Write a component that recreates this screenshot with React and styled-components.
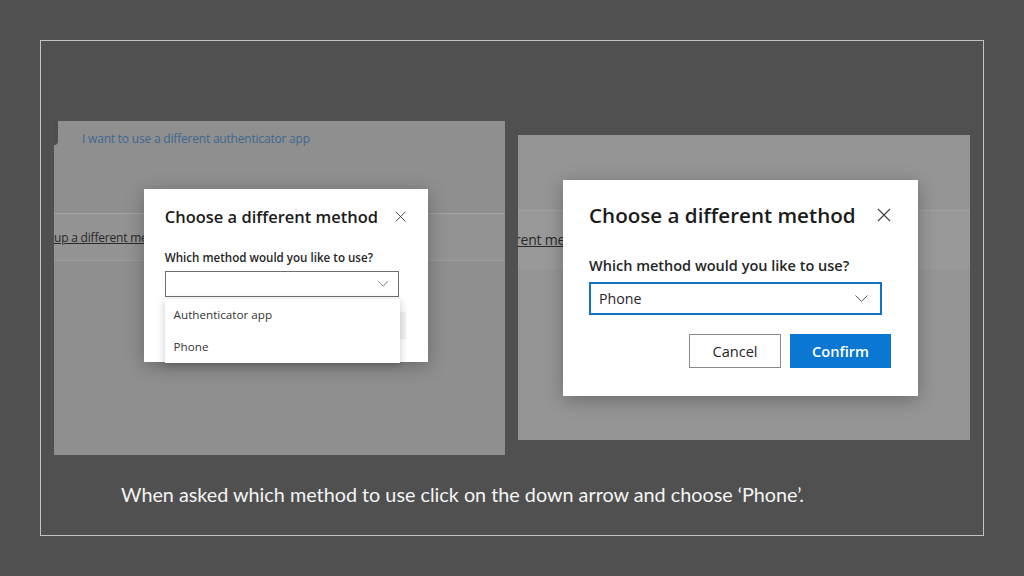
import React from "react";
import styled, { createGlobalStyle } from "styled-components";

const Global = createGlobalStyle`
  html, body { margin: 0; padding: 0; background: #505050; }
  body { width: 1024px; height: 576px; overflow: hidden; font-family: "Open Sans", "Noto Sans", sans-serif; }
`;

const Frame = styled.div`
  box-sizing: border-box;
  margin: 40px;
  width: 944px;
  height: 496px;
  border: 1px solid #c4c4c4;
  padding: 80px 13px 0;
  display: flex;
  flex-direction: column;
`;

const ShotRow = styled.div`
  display: flex;
  gap: 13px;
  align-items: flex-start;
`;

const Shot = styled.div`
  position: relative;
  overflow: hidden;
  width: ${(p) => p.$w}px;
  height: ${(p) => p.$h}px;
  margin-top: ${(p) => p.$top || 0}px;
  background: ${(p) => p.$bg};
  display: flex;
  flex-direction: column;
`;

const Notch = styled.div`
  position: absolute;
  left: 0;
  top: 0;
  width: 4px;
  height: 24px;
  background: #4e4e4e;
  border-bottom-right-radius: 4px;
`;

const BgLink = styled.div`
  margin: 10px 0 0 28px;
  font-size: 12px;
  line-height: 16px;
  color: #3f6890;
  letter-spacing: -0.2px;
`;

const Band = styled.div`
  margin-top: ${(p) => p.$top}px;
  height: ${(p) => p.$h}px;
  border-top: 1px solid #a2a2a2;
  border-bottom: 1px solid #9a9a9a;
  background: ${(p) => p.$bg};
  display: flex;
  align-items: center;
  overflow: hidden;
`;

const BandText = styled.span`
  margin-left: ${(p) => p.$shift}px;
  font-size: ${(p) => p.$fs}px;
  color: #2a2a2a;
  text-decoration: underline;
  white-space: nowrap;
  letter-spacing: -0.2px;
`;

const Dialog = styled.div`
  position: absolute;
  left: ${(p) => p.$x}px;
  top: ${(p) => p.$y}px;
  box-sizing: border-box;
  width: ${(p) => 355 * p.$k}px;
  height: ${(p) => 216 * p.$k}px;
  padding: ${(p) => `${24 * p.$k}px ${27 * p.$k}px 0 ${26 * p.$k}px`};
  background: #fff;
  box-shadow: 0 4px 18px rgba(0, 0, 0, 0.28);
  display: flex;
  flex-direction: column;
`;

const TitleRow = styled.div`
  display: flex;
  align-items: center;
  justify-content: space-between;
  height: ${(p) => 22 * p.$k}px;
`;

const Title = styled.div`
  font-size: ${(p) => 20.6 * p.$k}px;
  font-weight: 600;
  color: #1b1b1b;
  white-space: nowrap;
`;

const Label = styled.div`
  margin-top: ${(p) => 31 * p.$k}px;
  font-size: ${(p) => 14.5 * p.$k}px;
  line-height: ${(p) => 18 * p.$k}px;
  font-weight: 600;
  color: #262626;
  white-space: nowrap;
`;

const SelectWrap = styled.div`
  position: relative;
  margin-top: ${(p) => 7 * p.$k}px;
  width: ${(p) => 293 * p.$k}px;
`;

const SelectBox = styled.div`
  box-sizing: border-box;
  height: ${(p) => 33 * p.$k}px;
  border: ${(p) => (p.$focus ? `2px solid #0f74c8` : `1px solid #6e6e6e`)};
  padding: 0 ${(p) => 12 * p.$k}px 0 ${(p) => (p.$focus ? 8 : 9) * p.$k}px;
  display: flex;
  align-items: center;
  justify-content: space-between;
  font-size: ${(p) => 14.2 * p.$k}px;
  color: #262626;
  background: #fff;
`;

const List = styled.div`
  position: absolute;
  left: 0;
  top: ${(p) => 35 * p.$k}px;
  width: calc(100% + 1px);
  background: #fff;
  box-shadow: 0 2px 8px rgba(0, 0, 0, 0.22);
  z-index: 2;
`;

const Option = styled.div`
  height: ${(p) => 40 * p.$k}px;
  padding-left: ${(p) => 11 * p.$k}px;
  display: flex;
  align-items: center;
  font-size: ${(p) => 14.6 * p.$k}px;
  color: #333;
`;

const Buttons = styled.div`
  margin-top: ${(p) => 19 * p.$k}px;
  display: flex;
  justify-content: flex-end;
  gap: ${(p) => 9 * p.$k}px;
`;

const Button = styled.div`
  box-sizing: border-box;
  width: ${(p) => p.$w * p.$k}px;
  height: ${(p) => 34 * p.$k}px;
  display: flex;
  align-items: center;
  justify-content: center;
  font-size: ${(p) => 14.6 * p.$k}px;
  font-weight: ${(p) => (p.$primary ? 600 : 400)};
  color: ${(p) => (p.$primary ? "#fff" : "#262626")};
  background: ${(p) => (p.$primary ? "#0a78d2" : p.$disabled ? "#f1f1f1" : "#fff")};
  border: 1px solid ${(p) => (p.$primary ? "#0a78d2" : p.$disabled ? "#f1f1f1" : "#8a8a8a")};
`;

const Caption = styled.div`
  margin: 27px 0 0 67px;
  font-family: "Lato", "Open Sans", sans-serif;
  font-size: 19.8px;
  line-height: 24px;
  color: #f4f4f4;
  white-space: nowrap;
`;

const Chevron = ({ k }) => (
  <svg width={13 * k} height={7 * k} viewBox="0 0 13 7" fill="none">
    <polyline points="0.5,0.5 6.5,6.3 12.5,0.5" stroke="#5a5a5a" strokeWidth="1" />
  </svg>
);

const CloseX = ({ k }) => (
  <svg width={14 * k} height={14 * k} viewBox="0 0 14 14" fill="none">
    <path d="M1 1 L13 13 M13 1 L1 13" stroke="#444" strokeWidth="1.2" />
  </svg>
);

const MethodDialog = ({ k, x, y, value, open }) => (
  <Dialog $k={k} $x={x} $y={y}>
    <TitleRow $k={k}>
      <Title $k={k}>Choose a different method</Title>
      <CloseX k={k} />
    </TitleRow>
    <Label $k={k}>Which method would you like to use?</Label>
    <SelectWrap $k={k}>
      <SelectBox $k={k} $focus={!!value}>
        <span>{value}</span>
        <Chevron k={k} />
      </SelectBox>
      {open && (
        <List $k={k}>
          <Option $k={k}>Authenticator app</Option>
          <Option $k={k}>Phone</Option>
        </List>
      )}
    </SelectWrap>
    <Buttons $k={k}>
      <Button $k={k} $w={92} $disabled={open}>
        Cancel
      </Button>
      <Button $k={k} $w={101} $primary={!open} $disabled={open}>
        {open ? "" : "Confirm"}
      </Button>
    </Buttons>
  </Dialog>
);

export default function App() {
  return (
    <>
      <Global />
      <Frame>
        <ShotRow>
          <Shot $w={451} $h={334} $bg="#8f8f8f">
            <Notch />
            <BgLink>I want to use a different authenticator app</BgLink>
            <Band $top={66} $h={46} $bg="#939393">
              <BandText $shift={0} $fs={12}>
                up a different method
              </BandText>
            </Band>
            <MethodDialog k={0.8} x={90} y={68} open />
          </Shot>
          <Shot $w={452} $h={305} $top={14} $bg="#959595">
            <Band $top={75} $h={57} $bg="#999999">
              <BandText $shift={-3} $fs={14}>
                rent method
              </BandText>
            </Band>
            <MethodDialog k={1} x={45} y={45} value="Phone" />
          </Shot>
        </ShotRow>
        <Caption>When asked which method to use click on the down arrow and choose ‘Phone’.</Caption>
      </Frame>
    </>
  );
}
